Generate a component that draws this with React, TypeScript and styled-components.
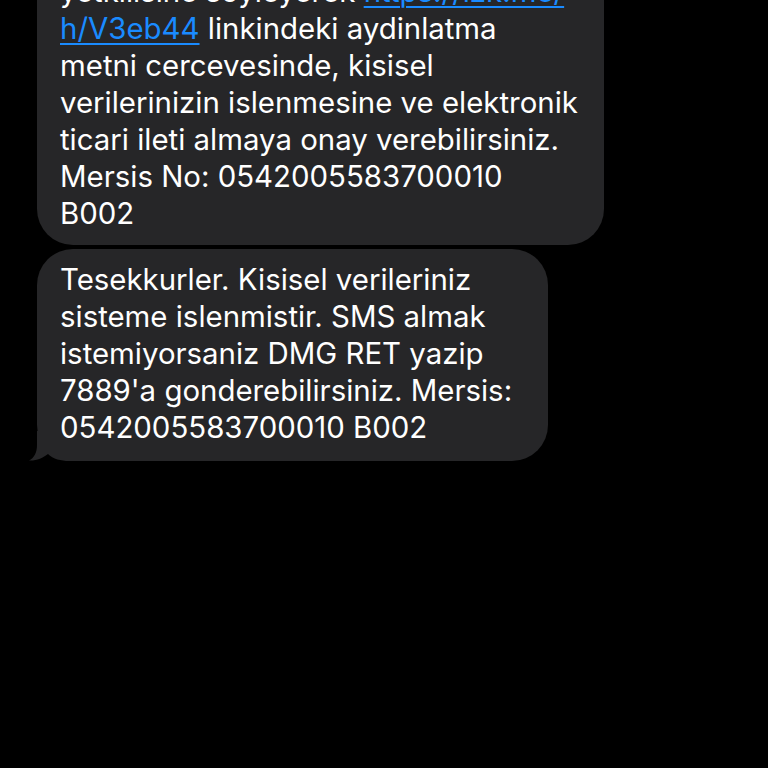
import React from 'react'
import styled, { createGlobalStyle } from 'styled-components'

const GlobalStyle = createGlobalStyle`
  html, body {
    margin: 0;
    padding: 0;
    background: #000;
    overflow: hidden;
  }
  body {
    font-family: Inter, "Noto Sans", "Liberation Sans", sans-serif;
    -webkit-font-smoothing: antialiased;
  }
`

const StyledThread = styled.div`
  display: flex;
  flex-direction: column;
  align-items: flex-start;
  gap: 4px;
  margin-top: -39px;
  padding-left: 37px;
  height: 808px;
  background: #000;
`

const StyledBubble = styled.div<{ $width: number; $padBottom: number }>`
  position: relative;
  box-sizing: border-box;
  width: ${({ $width }) => $width}px;
  padding: 12px 0 ${({ $padBottom }) => $padBottom}px 23px;
  background: #262628;
  border-radius: 36px;
  color: #fff;
  font-size: 29.4px;
  line-height: 37px;
`

const StyledLine = styled.div`
  position: relative;
  white-space: nowrap;
`

const StyledLink = styled.span`
  color: #1a8bff;
  text-decoration: underline;
  text-decoration-thickness: 2px;
  text-underline-offset: 4px;
`

const StyledTail = styled.svg`
  position: absolute;
  left: -8px;
  bottom: 0;
  width: 48px;
  height: 30px;
`

const TAIL_PATH =
  'M8 0 L8 14 C8 22 5 27 0 29.5 C7 30 14 27 19 23 C24 28 32 30 40 30 L48 30 L48 0 Z'

const MESSAGES = [
  {
    id: 'consent',
    width: 567,
    padBottom: 13,
    lines: [
      <>
        yetkilisine soyleyerek <StyledLink>https://izk.me/</StyledLink>
      </>,
      <>
        <StyledLink>h/V3eb44</StyledLink> linkindeki aydinlatma
      </>,
      'metni cercevesinde, kisisel',
      'verilerinizin islenmesine ve elektronik',
      'ticari ileti almaya onay verebilirsiniz.',
      'Mersis No: 0542005583700010',
      'B002',
    ],
  },
  {
    id: 'thanks',
    width: 511,
    padBottom: 15,
    tail: true,
    lines: [
      'Tesekkurler. Kisisel verileriniz',
      'sisteme islenmistir. SMS almak',
      'istemiyorsaniz DMG RET yazip',
      "7889'a gonderebilirsiniz. Mersis:",
      '0542005583700010 B002',
    ],
  },
]

const App: React.FC = () => {
  return (
    <>
      <GlobalStyle />
      <StyledThread>
        {MESSAGES.map(({ id, width, padBottom, tail, lines }) => (
          <StyledBubble key={id} $width={width} $padBottom={padBottom}>
            {tail && (
              <StyledTail viewBox="0 0 48 30">
                <path d={TAIL_PATH} fill="#262628" />
              </StyledTail>
            )}
            {lines.map((line, i) => (
              <StyledLine key={i}>{line}</StyledLine>
            ))}
          </StyledBubble>
        ))}
      </StyledThread>
    </>
  )
}

export default App
